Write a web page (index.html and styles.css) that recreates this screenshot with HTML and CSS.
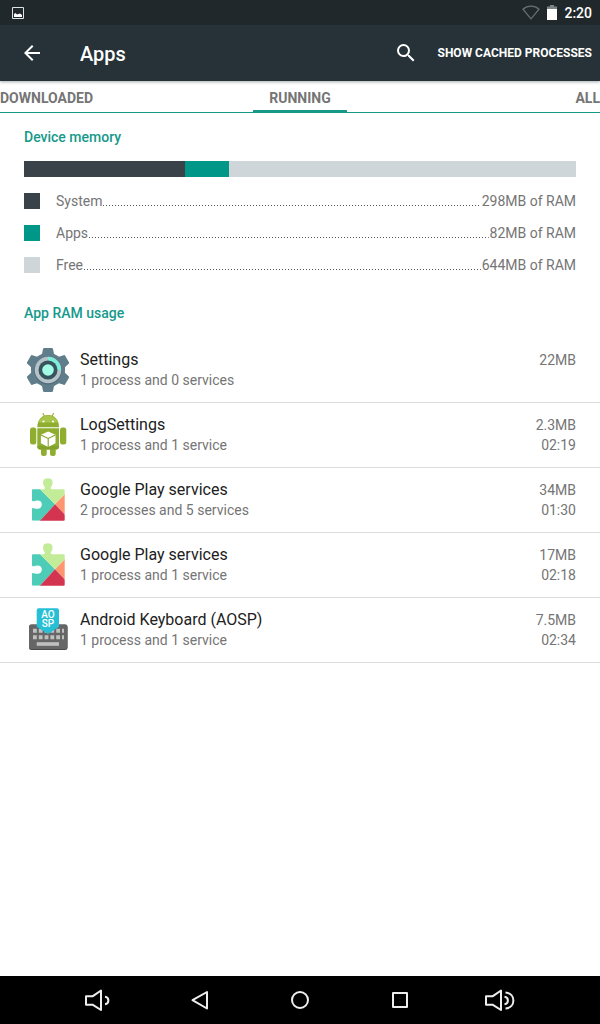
FILE: index.html
```html
<!DOCTYPE html>
<html lang="en">
<head>
    <meta charset="UTF-8">
    <meta name="viewport" content="width=device-width, initial-scale=1.0">
    <title>Apps</title>
    <link rel="stylesheet" href="styles.css">
</head>
<body>
    <!-- Shared icon used by both Play services rows -->
    <svg class="defs" width="0" height="0" aria-hidden="true">
        <defs>
            <clipPath id="puzzle">
                <path d="M9 13.300h10.200c1.500 0 2-1 1.400-2.200C19.900 9.800 19 8.600 19 6.500c0-2.800 1.900-4.200 4.800-4.200s4.800 1.400 4.800 4.200c0 2.100-.9 3.300-1.600 4.600-.6 1.200-.1 2.200 1.400 2.200h11.300q1 0 1 1v29.400q0 1-1 1H9q-1 0-1-1V33.500c0-1.500 1-1.700 2-1.300 1 .4 2 .6 3.500.6 2.800 0 4.300-1.700 4.300-4.200s-1.500-4-4.300-4c-1.500 0-2.500.2-3.500.6-1 .4-2 .1-2-1.300V14.300q0-1 1-1z"/>
            </clipPath>
            <symbol id="play-services" viewBox="0 0 48 48">
                <g clip-path="url(#puzzle)">
                    <path fill="#4dcdb8" d="M0 0h16v13.300l15 15-15 16.400H0z"/>
                    <path fill="#c3ec99" d="M16 0h25v18.300l-10 10-15-15z"/>
                    <path fill="#ff9670" d="M41 18.300v20.400L31 28.300z"/>
                    <path fill="#d33550" d="M31 28.300l10 10.400V48H13z"/>
                </g>
            </symbol>
        </defs>
    </svg>

    <div class="screen">
        <div class="status-bar">
            <svg class="notification" width="12" height="12" viewBox="0 0 12 12">
                <path fill="none" stroke="#dfe2e3" d="M.5.5h11v11H.5z"/>
                <path fill="#fff" d="M2 10V7l1.500-1L5 7.500l1.500-.5L8 6.500 10 8v2z"/>
            </svg>
            <div class="status-icons">
                <svg width="18" height="15" viewBox="0 0 18 15">
                    <path fill="none" stroke="#687074" stroke-width="1.2" d="M1 4.200C5.500.200 12.500.200 17 4.200L9 13.800z"/>
                </svg>
                <svg width="10" height="15" viewBox="0 0 10 15">
                    <path fill="#7d8486" d="M3 0h4v1.500h3V4H0V1.500h3z"/>
                    <path fill="#fff" d="M0 4h10v11H0z"/>
                </svg>
                <span class="clock">2:20</span>
            </div>
        </div>

        <header class="app-bar">
            <button class="icon-btn" aria-label="Navigate up">
                <svg width="24" height="24" viewBox="0 0 24 24">
                    <path fill="#fff" d="M20 11H7.830l5.590-5.590L12 4l-8 8 8 8 1.410-1.410L7.830 13H20z"/>
                </svg>
            </button>
            <h1>Apps</h1>
            <button class="icon-btn" aria-label="Search">
                <svg width="24" height="24" viewBox="0 0 24 24">
                    <path fill="#fff" d="M15.500 14h-.79l-.28-.27A6.470 6.470 0 0 0 16 9.500 6.500 6.500 0 1 0 9.500 16c1.610 0 3.090-.59 4.230-1.570l.27.28v.79l5 4.990L20.490 19zm-6 0a4.500 4.500 0 1 1 0-9 4.500 4.500 0 0 1 0 9z"/>
                </svg>
            </button>
            <button class="text-btn">SHOW CACHED PROCESSES</button>
        </header>

        <nav class="tabs">
            <button class="tab">DOWNLOADED</button>
            <button class="tab active">RUNNING</button>
            <button class="tab">ALL</button>
        </nav>

        <main>
            <section class="memory">
                <h2>Device memory</h2>
                <div class="memory-bar">
                    <div class="system" style="flex-grow: 298"></div>
                    <div class="apps" style="flex-grow: 82"></div>
                    <div class="free" style="flex-grow: 644"></div>
                </div>
                <ul class="legend">
                    <li><span class="swatch system"></span>System<span class="dots"></span>298MB of RAM</li>
                    <li><span class="swatch apps"></span>Apps<span class="dots"></span>82MB of RAM</li>
                    <li><span class="swatch free"></span>Free<span class="dots"></span>644MB of RAM</li>
                </ul>
                <h2>App RAM usage</h2>
            </section>

            <ul class="app-list">
                <li>
                    <svg class="app-icon" viewBox="0 0 48 48">
                        <g fill="#607d8b">
                            <circle cx="24" cy="24" r="17"/>
                            <path id="tooth" d="M15 10.500l3-2.500 1-5q.2-1 1.200-1h7.600q1 0 1.200 1l1 5 3 2.500z"/>
                            <use href="#tooth" transform="rotate(60 24 24)"/>
                            <use href="#tooth" transform="rotate(120 24 24)"/>
                            <use href="#tooth" transform="rotate(180 24 24)"/>
                            <use href="#tooth" transform="rotate(240 24 24)"/>
                            <use href="#tooth" transform="rotate(300 24 24)"/>
                        </g>
                        <circle cx="24" cy="25" r="13.5" fill="#506a76"/>
                        <circle cx="24" cy="24" r="13.2" fill="#b5c2c8"/>
                        <path fill="#7eeed8" d="M24 24V10.800A13.200 13.200 0 0 1 37.200 24z"/>
                        <circle cx="24" cy="24" r="9.5" fill="#37535d"/>
                        <circle cx="24" cy="24" r="5.8" fill="#a3fbe5"/>
                    </svg>
                    <div class="app-name">
                        <h3>Settings</h3>
                        <p>1 process and 0 services</p>
                    </div>
                    <div class="app-usage">
                        <p>22MB</p>
                    </div>
                </li>
                <li>
                    <svg class="app-icon" viewBox="0 0 48 48">
                        <path fill="none" stroke="#9ab83c" stroke-width="1.2" stroke-linecap="round" d="M19 2.500l2 3.500M29.500 2.500l-2 3.500"/>
                        <g fill="#8fae2f">
                            <path d="M13.300 16.300C13.300 8.500 18 4 24.200 4S35 8.500 35 16.300z"/>
                            <path d="M13.300 17.300H35v18.200q0 3-3 3H16.300q-3 0-3-3z"/>
                            <rect x="6" y="16.500" width="6.300" height="17" rx="2.500"/>
                            <rect x="36" y="16.500" width="6.300" height="17" rx="2.500"/>
                            <rect x="17" y="36" width="5.700" height="9" rx="2.500"/>
                            <rect x="26" y="36" width="5.700" height="9" rx="2.500"/>
                        </g>
                        <path fill="#a9c54a" d="M14.500 11.500C16 7.500 19.500 4.500 24.200 4.500s8.300 3 9.800 7z"/>
                        <path fill="#83a22c" d="M13.300 35H35v.5q0 3-3 3H16.300q-3 0-3-3z"/>
                        <circle cx="19.500" cy="10.500" r="1.100" fill="#fff"/>
                        <circle cx="29" cy="10.500" r="1.100" fill="#fff"/>
                        <path fill="#fff" d="M24.200 20.500l7.300 3.300v8.400l-7.300 3.800-7.300-3.800v-8.400z"/>
                        <path fill="none" stroke="#86a52c" stroke-width="1.1" d="M17 24l7.200 3.500L31.400 24M24.200 27.500V36"/>
                    </svg>
                    <div class="app-name">
                        <h3>LogSettings</h3>
                        <p>1 process and 1 service</p>
                    </div>
                    <div class="app-usage">
                        <p>2.3MB</p>
                        <p>02:19</p>
                    </div>
                </li>
                <li>
                    <svg class="app-icon"><use href="#play-services"/></svg>
                    <div class="app-name">
                        <h3>Google Play services</h3>
                        <p>2 processes and 5 services</p>
                    </div>
                    <div class="app-usage">
                        <p>34MB</p>
                        <p>01:30</p>
                    </div>
                </li>
                <li>
                    <svg class="app-icon"><use href="#play-services"/></svg>
                    <div class="app-name">
                        <h3>Google Play services</h3>
                        <p>1 process and 1 service</p>
                    </div>
                    <div class="app-usage">
                        <p>17MB</p>
                        <p>02:18</p>
                    </div>
                </li>
                <li>
                    <svg class="app-icon" viewBox="0 0 48 48">
                        <rect x="5" y="19" width="38.500" height="25" rx="2.500" fill="#4a4a4a"/>
                        <rect x="5" y="18.300" width="38.500" height="24.700" rx="2.500" fill="#666"/>
                        <path stroke="#c0c0c0" stroke-width="4" stroke-dasharray="3.800 2" d="M9 24.800h31M9 31.300h31"/>
                        <path stroke="#c0c0c0" stroke-width="3.600" d="M12.700 38H35"/>
                        <path fill="#26bfd5" d="M14.700 2.300H33q2 0 2 2v16.500L24 28 12.700 20.800V4.300q0-2 2-2z"/>
                        <text class="badge-text" x="24" y="12">AO</text>
                        <text class="badge-text" x="24" y="21">SP</text>
                    </svg>
                    <div class="app-name">
                        <h3>Android Keyboard (AOSP)</h3>
                        <p>1 process and 1 service</p>
                    </div>
                    <div class="app-usage">
                        <p>7.5MB</p>
                        <p>02:34</p>
                    </div>
                </li>
            </ul>
        </main>

        <footer class="nav-bar">
            <button aria-label="Volume down">
                <svg width="32" height="24" viewBox="0 0 32 24">
                    <path d="M2 8.300h6.500L17 2.500V22l-8.500-5.300H2z"/>
                    <path d="M21 8.800c4.500.5 4.500 7 0 7.500"/>
                </svg>
            </button>
            <button aria-label="Back">
                <svg width="32" height="24" viewBox="0 0 32 24">
                    <path d="M23 4v16.500L8.500 12.200z"/>
                </svg>
            </button>
            <button aria-label="Home">
                <svg width="32" height="24" viewBox="0 0 32 24">
                    <circle cx="16" cy="12" r="8"/>
                </svg>
            </button>
            <button aria-label="Recent apps">
                <svg width="32" height="24" viewBox="0 0 32 24">
                    <path d="M9 5h14v14H9z"/>
                </svg>
            </button>
            <button aria-label="Volume up">
                <svg width="32" height="24" viewBox="0 0 32 24">
                    <path d="M2 8.300h6.500L17 2.500V22l-8.500-5.300H2z"/>
                    <path d="M20.500 8.800c4.500.5 4.500 7 0 7.500M21.500 4.500c10.500 1 10.500 15 0 16"/>
                </svg>
            </button>
        </footer>
    </div>
</body>
</html>
```
FILE: styles.css
```css
:root {
    --status: #21282b;
    --bar: #263238;
    --teal: #009688;
    --accent: #16998b;
    --system: #384248;
    --free: #cfd6d9;
    --text-main: #212121;
    --text-dim: #757575;
}

* {
    box-sizing: border-box;
}

body {
    margin: 0;
    font-family: Roboto, sans-serif;
    font-size: 14px;
    line-height: 20px;
    color: var(--text-dim);
    background-color: #fff;
}

h1, h2, h3, p, ul {
    margin: 0;
    padding: 0;
}

ul {
    list-style: none;
}

svg {
    display: block;
}

button {
    padding: 0;
    border: none;
    background: none;
    font-family: inherit;
    cursor: pointer;
}

.defs {
    position: absolute;
}

.screen {
    display: flex;
    flex-direction: column;
    min-height: 100vh;
}

.status-bar {
    display: flex;
    justify-content: space-between;
    align-items: center;
    height: 25px;
    padding: 0 8px 0 12px;
    background-color: var(--status);
}

.status-icons {
    display: flex;
    align-items: center;
    gap: 7px;
}

.clock {
    color: #fff;
    font-weight: 500;
}

.app-bar {
    display: flex;
    align-items: center;
    height: 56px;
    padding: 0 8px;
    background-color: var(--bar);
    box-shadow: 0 1px 3px rgba(38, 50, 56, 0.4);
}

.app-bar h1 {
    flex: 1;
    padding: 2px 0 0 24px;
    font-size: 20px;
    font-weight: 500;
    color: #fff;
}

.icon-btn {
    display: grid;
    place-items: center;
    width: 48px;
    height: 48px;
}

.text-btn {
    padding-left: 8px;
    font-size: 12px;
    font-weight: 700;
    color: #fff;
}

.tabs {
    display: grid;
    grid-template-columns: 1fr auto 1fr;
    height: 32px;
    border-bottom: 1px solid var(--accent);
}

.tab {
    padding-top: 5px;
    border-bottom: 2px solid transparent;
    font-size: 14px;
    font-weight: 700;
    color: var(--text-dim);
}

.tab:first-child {
    justify-self: start;
}

.tab:last-child {
    justify-self: end;
}

.tab.active {
    padding: 5px 16px 0;
    border-bottom-color: var(--accent);
}

main {
    flex: 1;
}

.memory {
    padding: 14px 24px 15px;
}

h2 {
    font-size: 14px;
    font-weight: 500;
    color: var(--accent);
}

.memory-bar {
    display: flex;
    height: 16px;
    margin: 14px 0 8px;
}

.system {
    background-color: var(--system);
}

.apps {
    background-color: var(--teal);
}

.free {
    background-color: var(--free);
}

.legend {
    margin-bottom: 22px;
}

.legend li {
    display: flex;
    align-items: center;
    height: 32px;
}

.swatch {
    width: 16px;
    height: 16px;
    margin-right: 16px;
}

.dots {
    flex: 1;
    height: 10px;
    margin: 0 1px;
    background: repeating-linear-gradient(to right, #555 0 1px, transparent 1px 3px) bottom / 100% 1px no-repeat;
}

.app-list li {
    display: flex;
    padding: 12px 24px;
    border-bottom: 1px solid #dcdcdc;
}

.app-icon {
    width: 48px;
    height: 48px;
    margin: -4px 8px -4px 0;
}

.app-name {
    flex: 1;
}

.app-name h3 {
    font-size: 16px;
    font-weight: 400;
    color: var(--text-main);
}

.app-usage {
    text-align: right;
}

.badge-text {
    font-size: 10px;
    font-weight: 500;
    fill: #fff;
    text-anchor: middle;
}

.nav-bar {
    display: flex;
    height: 48px;
    padding: 0 50px;
    background-color: #000;
}

.nav-bar button {
    flex: 1;
    display: grid;
    place-items: center;
}

.nav-bar svg {
    fill: none;
    stroke: #eee;
    stroke-width: 2;
    stroke-linejoin: round;
}
```
